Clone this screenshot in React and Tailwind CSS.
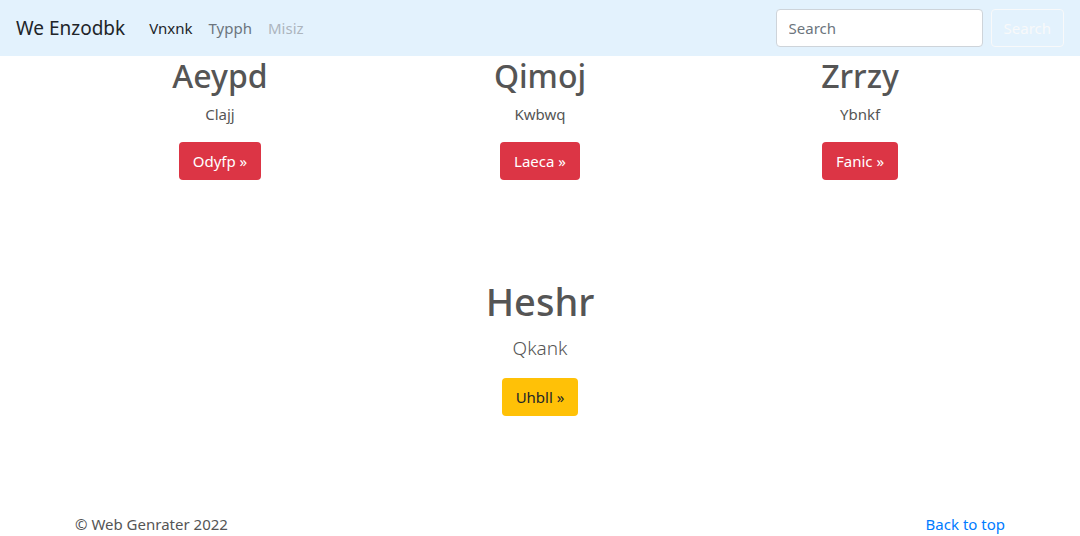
export default function App() {
  const cols = [
    { title: "Aeypd", text: "Clajj", btn: "Odyfp" },
    { title: "Qimoj", text: "Kwbwq", btn: "Laeca" },
    { title: "Zrrzy", text: "Ybnkf", btn: "Fanic" },
  ];

  return (
    <div
      className="min-h-[536px] bg-white text-[#212529]"
      style={{ fontFamily: '"Noto Sans", "Open Sans", sans-serif' }}
    >
      {/* NAVBAR */}
      <nav className="h-14 bg-[#e3f2fd] flex items-center px-4">
        <span className="text-[19px] text-[#212529] mr-[24px] leading-[30px]">We Enzodbk</span>
        <div className="flex items-center gap-4 text-[15px]">
          <a className="text-[#212529]">Vnxnk</a>
          <a className="text-[#6c757d]">Typph</a>
          <a className="text-[#adb5bd]">Misiz</a>
        </div>
        <div className="ml-auto flex items-center gap-2">
          <input
            placeholder="Search"
            className="w-[207px] h-[38px] px-3 rounded border border-[#ced4da] bg-white text-[15px] placeholder:text-[#6c757d] outline-none"
          />
          <button className="h-[38px] px-3 rounded border border-[#f8f9fa] text-[#f8f9fa] text-[15px]">
            Search
          </button>
        </div>
      </nav>

      {/* COLUMNS */}
      <div className="w-[960px] mx-auto grid grid-cols-3">
        {cols.map((c) => (
          <div key={c.title} className="flex flex-col items-center">
            <h2 className="text-[32px] font-medium leading-[38px] text-[#555] mt-[1px] mb-[7px]">
              {c.title}
            </h2>
            <p className="text-[15px] leading-6 text-[#555] mb-[16px]">{c.text}</p>
            <button className="h-[38px] px-[14px] rounded bg-[#dc3545] text-white text-[15px]">
              {c.btn} »
            </button>
          </div>
        ))}
      </div>

      {/* CENTER */}
      <div className="flex flex-col items-center mt-[97px]">
        <h1 className="text-[38px] font-medium leading-[48px] text-[#555] mb-[8px]">Heshr</h1>
        <p className="text-[19px] font-light leading-[30px] text-[#555] mb-[15px]">Qkank</p>
        <button className="h-[38px] px-[14px] rounded bg-[#ffc107] text-[#212529] text-[15px]">
          Uhbll »
        </button>
      </div>

      {/* FOOTER */}
      <footer className="w-[930px] mx-auto flex justify-between mt-[96px] text-[15px] leading-6 text-[#555]">
        <span>© Web Genrater 2022</span>
        <a className="text-[#007bff]">Back to top</a>
      </footer>
    </div>
  );
}
